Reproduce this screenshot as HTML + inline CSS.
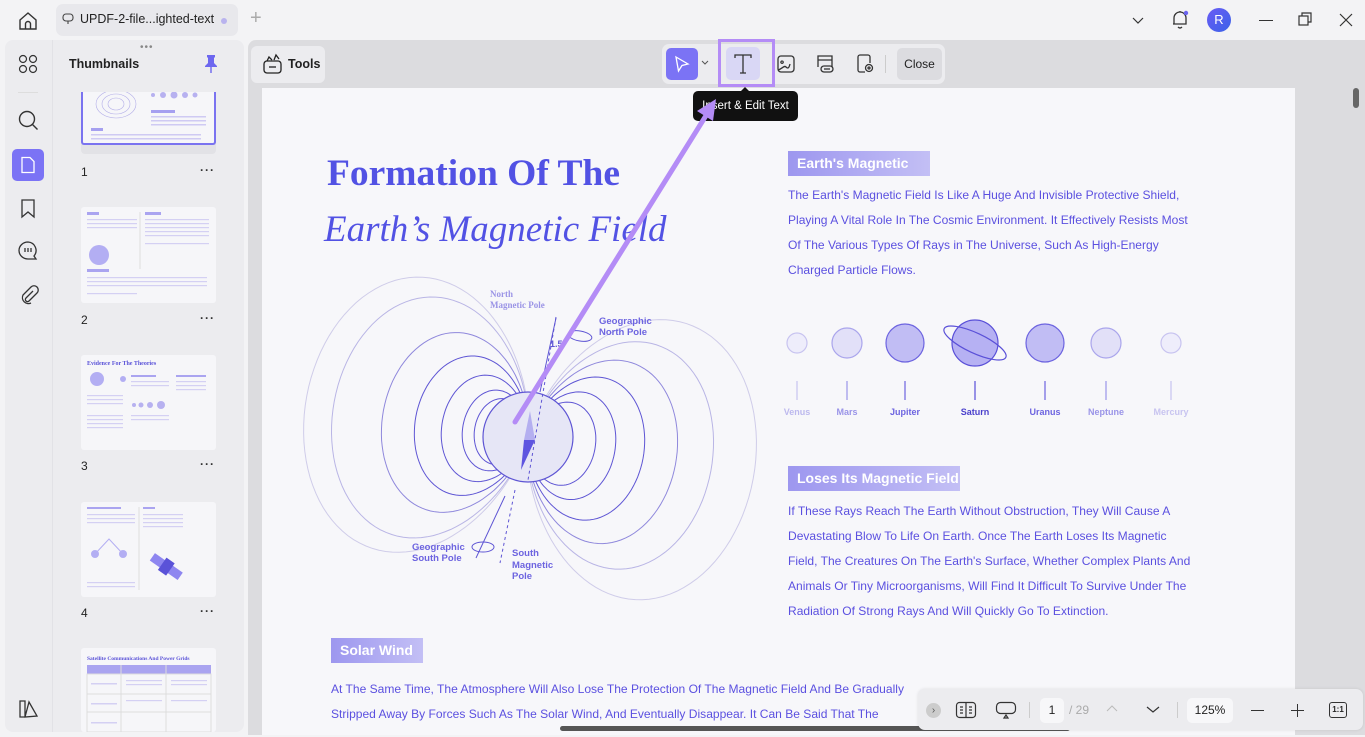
<!DOCTYPE html>
<html><head><meta charset="utf-8">
<style>
*{margin:0;padding:0;box-sizing:border-box}
body{width:1365px;height:735px;overflow:hidden;background:#f3f3f5;font-family:"Liberation Sans",sans-serif;position:relative}
.abs{position:absolute}
.txt{color:#5b50e0;font-size:12.05px;line-height:25px;white-space:nowrap}
.chip{position:absolute;height:25px;background:linear-gradient(90deg,#9d97ef,#c3bff5);color:#fff;font-weight:bold;font-size:14px;line-height:25px;padding-left:9px;white-space:nowrap}
.thumb{position:absolute;left:81px;width:135px;background:#f6f6f9;border-radius:3px}
.num{position:absolute;left:81px;font-size:12px;color:#222}
.dots{position:absolute;left:200px;font-size:12px;color:#333;letter-spacing:1px;font-weight:bold}
</style></head><body>
<!-- top bar -->
<svg class="abs" style="left:17px;top:10px" width="22" height="22" viewBox="0 0 22 22" fill="none" stroke="#333" stroke-width="1.4"><path d="M3 10 L11 3 L19 10 V19 H3 Z"/><path d="M8.5 19 V14 a2.5 2.5 0 0 1 5 0 V19"/></svg>
<div class="abs" style="left:56px;top:4px;width:182px;height:32px;background:#e8e8ec;border-radius:7px"></div>
<svg class="abs" style="left:62px;top:13px" width="12" height="12" viewBox="0 0 12 12" fill="none" stroke="#444" stroke-width="1.1"><rect x="1" y="1" width="10" height="7" rx="3"/><path d="M6 8v3"/></svg>
<div class="abs" style="left:80px;top:12px;font-size:12.5px;color:#222">UPDF-2-file...ighted-text</div>
<div class="abs" style="left:221px;top:18px;width:6px;height:6px;border-radius:50%;background:#b9b3ee"></div>
<div class="abs" style="left:250px;top:7px;font-size:20px;color:#aaa;font-weight:300">+</div>
<svg class="abs" style="left:1130px;top:13px" width="16" height="14" viewBox="0 0 16 14" fill="none" stroke="#333" stroke-width="1.2"><path d="M3 5l5 5 5-5"/></svg>
<svg class="abs" style="left:1170px;top:8px" width="20" height="24" viewBox="0 0 20 24" fill="none" stroke="#333" stroke-width="1.3"><path d="M4 16 V10 a6 6 0 0 1 12 0 V16 H3 M10 3v1 M8 19 q2 2 4 0"/><circle cx="16" cy="5" r="2.2" fill="#6b64f0" stroke="none"/></svg>
<div class="abs" style="left:1207px;top:8px;width:24px;height:24px;border-radius:50%;background:linear-gradient(135deg,#6a5cf5,#3a62e8);color:#fff;font-size:13px;text-align:center;line-height:24px">R</div>
<div class="abs" style="left:1259px;top:20px;width:14px;height:1.3px;background:#333"></div>
<svg class="abs" style="left:1298px;top:12px" width="15" height="15" viewBox="0 0 15 15" fill="none" stroke="#333" stroke-width="1.2"><rect x="1" y="4" width="9" height="9"/><path d="M4 4V1h9v9h-3"/></svg>
<svg class="abs" style="left:1339px;top:13px" width="14" height="14" viewBox="0 0 14 14" stroke="#333" stroke-width="1.2"><path d="M1 1l12 12M13 1L1 13"/></svg>

<!-- left sidebar -->
<div class="abs" style="left:5px;top:40px;width:239px;height:692px;background:#ececef;border-radius:8px"></div>
<div class="abs" style="left:52px;top:40px;width:1px;height:692px;background:#e2e2e6"></div>
<div class="abs" style="left:140px;top:42px;font-size:10px;color:#888;letter-spacing:1px">•••</div>
<svg class="abs" style="left:18px;top:54px" width="20" height="20" viewBox="0 0 20 20" fill="none" stroke="#333" stroke-width="1.2"><circle cx="5" cy="5" r="3.5"/><circle cx="15" cy="5" r="3.5"/><circle cx="5" cy="15" r="3.5"/><circle cx="15" cy="15" r="3.5"/></svg>
<div class="abs" style="left:18px;top:92px;width:20px;height:1px;background:#ddd"></div>
<svg class="abs" style="left:17px;top:109px" width="24" height="24" viewBox="0 0 24 24" fill="none" stroke="#333" stroke-width="1.4"><circle cx="10" cy="10" r="7.5"/><path d="M15.5 15.5l5 5"/></svg>
<div class="abs" style="left:12px;top:149px;width:32px;height:32px;background:#7b73f5;border-radius:5px"></div>
<svg class="abs" style="left:19px;top:156px" width="18" height="18" viewBox="0 0 18 18" fill="none" stroke="#fff" stroke-width="1.3"><path d="M3 1.5h8l4 4v11H3z"/></svg>
<svg class="abs" style="left:19px;top:199px" width="18" height="20" viewBox="0 0 18 20" fill="none" stroke="#333" stroke-width="1.3"><path d="M3 1h12v17l-6-5-6 5z"/></svg>
<svg class="abs" style="left:17px;top:240px" width="22" height="22" viewBox="0 0 22 22" fill="none" stroke="#333" stroke-width="1.3"><path d="M11 2a9 8.5 0 1 0 0 17h8l-2-3a8.5 8.5 0 0 0-6-14z"/><path d="M8 8v4M11 8v4M14 8v4"/></svg>
<svg class="abs" style="left:19px;top:285px" width="20" height="20" viewBox="0 0 20 20" fill="none" stroke="#333" stroke-width="1.3"><path d="M14 6l-7 7a2 2 0 0 0 3 3l8-8a4 4 0 0 0-6-6l-8 8a6 6 0 0 0 8 8"/></svg>
<svg class="abs" style="left:18px;top:699px" width="22" height="20" viewBox="0 0 22 20" fill="none" stroke="#333" stroke-width="1.3"><path d="M2 2h5v16H2zM7 18l4-15 8 14z"/></svg>
<div class="abs" style="left:69px;top:57px;font-size:12.5px;font-weight:bold;color:#222">Thumbnails</div>
<svg class="abs" style="left:203px;top:54px" width="16" height="20" viewBox="0 0 16 20" fill="#6d67ef"><path d="M4 1h8v2l-1 1v5l3 3v1H2v-1l3-3V4L4 3z"/><rect x="7.3" y="13" width="1.4" height="6"/></svg>
<!-- thumbs -->
<div class="abs" style="left:81px;top:92px;width:135px;height:62px;background:#e2e2e6;border-radius:4px"></div>
<div class="thumb" style="top:92px;height:53px;border:2px solid #7a73f0;border-top:none;border-radius:0 0 3px 3px">
<svg width="131" height="51"><g fill="none" stroke="#b3aee8" stroke-width=".6"><ellipse cx="33" cy="12" rx="20" ry="14"/><ellipse cx="33" cy="12" rx="14" ry="10"/><ellipse cx="33" cy="12" rx="8" ry="6"/></g><g fill="#b7b1f0"><circle cx="70" cy="3" r="2"/><circle cx="80" cy="3" r="3"/><circle cx="91" cy="3" r="3.5"/><circle cx="102" cy="3" r="3"/><circle cx="112" cy="3" r="2.5"/></g><rect x="68" y="18" width="24" height="3" fill="#a6a0f0"/><g fill="#cfcaf3"><rect x="68" y="24" width="55" height="1.5"/><rect x="68" y="28" width="55" height="1.5"/><rect x="68" y="32" width="55" height="1.5"/></g><rect x="8" y="36" width="12" height="3" fill="#a6a0f0"/><rect x="8" y="42" width="110" height="1.5" fill="#cfcaf3"/><rect x="8" y="46" width="110" height="1.5" fill="#cfcaf3"/></svg></div>
<div class="num" style="top:165px">1</div><div class="dots" style="top:163px">···</div>
<div class="thumb" style="top:207px;height:96px"><svg width="135" height="96"><rect x="6" y="5" width="12" height="3" fill="#aaa4f0"/><rect x="64" y="5" width="16" height="3" fill="#aaa4f0"/><g fill="#d4d0f3"><rect x="6" y="12" width="50" height="1.2"/><rect x="6" y="16" width="50" height="1.2"/><rect x="6" y="20" width="50" height="1.2"/><rect x="64" y="12" width="64" height="1.2"/><rect x="64" y="16" width="64" height="1.2"/><rect x="64" y="20" width="64" height="1.2"/><rect x="64" y="24" width="64" height="1.2"/><rect x="64" y="28" width="64" height="1.2"/><rect x="64" y="36" width="64" height="1.2"/><rect x="6" y="70" width="120" height="1.2"/><rect x="6" y="74" width="120" height="1.2"/><rect x="6" y="78" width="120" height="1.2"/><rect x="6" y="86" width="50" height="1.2"/></g><circle cx="18" cy="48" r="10" fill="#b3aef3"/><rect x="6" y="62" width="22" height="3" fill="#aaa4f0"/><line x1="59" y1="5" x2="59" y2="62" stroke="#ddd"/></svg></div>
<div class="num" style="top:313px">2</div><div class="dots" style="top:311px">···</div>
<div class="thumb" style="top:355px;height:95px"><svg width="135" height="95"><text x="6" y="10" font-size="6" font-weight="bold" fill="#5a52d8" font-family="Liberation Serif">Evidence For The Theories</text><circle cx="16" cy="24" r="7" fill="#b3aef3"/><circle cx="42" cy="24" r="3" fill="#b3aef3"/><rect x="50" y="20" width="25" height="2" fill="#aaa4f0"/><rect x="95" y="20" width="30" height="2" fill="#aaa4f0"/><g fill="#d4d0f3"><rect x="6" y="40" width="36" height="1.2"/><rect x="6" y="44" width="36" height="1.2"/><rect x="6" y="48" width="36" height="1.2"/><rect x="6" y="60" width="36" height="1.2"/><rect x="6" y="64" width="36" height="1.2"/><rect x="6" y="68" width="36" height="1.2"/><rect x="6" y="72" width="36" height="1.2"/><rect x="50" y="26" width="38" height="1.2"/><rect x="50" y="30" width="38" height="1.2"/><rect x="95" y="26" width="30" height="1.2"/><rect x="95" y="30" width="30" height="1.2"/><rect x="95" y="34" width="30" height="1.2"/><rect x="50" y="60" width="38" height="1.2"/><rect x="50" y="64" width="38" height="1.2"/></g><g fill="#b7b1f0"><circle cx="53" cy="50" r="2"/><circle cx="60" cy="50" r="2.5"/><circle cx="69" cy="50" r="3"/><circle cx="80" cy="50" r="4"/></g></svg></div>
<div class="num" style="top:459px">3</div><div class="dots" style="top:457px">···</div>
<div class="thumb" style="top:502px;height:95px"><svg width="135" height="95"><rect x="6" y="5" width="34" height="2" fill="#aaa4f0"/><rect x="62" y="5" width="12" height="2" fill="#aaa4f0"/><g fill="#d4d0f3"><rect x="6" y="12" width="48" height="1.2"/><rect x="6" y="16" width="48" height="1.2"/><rect x="6" y="20" width="48" height="1.2"/><rect x="62" y="12" width="40" height="1.2"/><rect x="62" y="16" width="40" height="1.2"/><rect x="62" y="20" width="40" height="1.2"/><rect x="62" y="24" width="40" height="1.2"/><rect x="6" y="80" width="48" height="1.2"/><rect x="6" y="84" width="48" height="1.2"/></g><path d="M14 52 L28 37 L42 52" fill="none" stroke="#b3aef3"/><circle cx="14" cy="52" r="4" fill="#b3aef3"/><circle cx="42" cy="52" r="4" fill="#b3aef3"/><g transform="rotate(35 85 65)"><rect x="68" y="60" width="34" height="9" fill="#8e86f0"/><rect x="80" y="57" width="10" height="15" fill="#5a52d8"/></g><line x1="58" y1="5" x2="58" y2="88" stroke="#ddd"/></svg></div>
<div class="num" style="top:606px">4</div><div class="dots" style="top:604px">···</div>
<div class="thumb" style="top:648px;height:84px"><svg width="135" height="84"><text x="6" y="12" font-size="5.5" font-weight="bold" fill="#5a52d8" font-family="Liberation Serif">Satellite Communications And Power Grids</text><rect x="6" y="17" width="124" height="9" fill="#aaa4f0"/><g stroke="#ddd" fill="none"><rect x="6" y="26" width="124" height="58"/><line x1="40" y1="17" x2="40" y2="84"/><line x1="85" y1="17" x2="85" y2="84"/><line x1="6" y1="46" x2="130" y2="46"/><line x1="6" y1="64" x2="130" y2="64"/></g><g fill="#d4d0f3"><rect x="10" y="35" width="26" height="1.5"/><rect x="45" y="32" width="36" height="1.2"/><rect x="45" y="36" width="36" height="1.2"/><rect x="90" y="32" width="36" height="1.2"/><rect x="90" y="36" width="36" height="1.2"/><rect x="10" y="55" width="26" height="1.5"/><rect x="45" y="52" width="36" height="1.2"/><rect x="90" y="52" width="36" height="1.2"/><rect x="10" y="74" width="26" height="1.5"/></g></svg></div>

<!-- main area -->
<div class="abs" style="left:248px;top:40px;width:1117px;height:695px;background:#dcdcdf;border-radius:8px 0 0 0"></div>
<div class="abs" style="left:262px;top:88px;width:1033px;height:647px;background:#f7f7fa"></div>
<div class="abs" style="left:1353px;top:88px;width:6px;height:20px;background:#666;border-radius:3px"></div>
<!-- tools button -->
<div class="abs" style="left:251px;top:46px;width:74px;height:37px;background:#ececef;border-radius:6px"></div>
<svg class="abs" style="left:262px;top:53px" width="22" height="22" viewBox="0 0 22 22" fill="none" stroke="#222" stroke-width="1.3"><rect x="2" y="8" width="17" height="12" rx="3"/><path d="M7 14h7"/><path d="M5 8l2-4 3 3M12 7l2-5 3 4"/></svg>
<div class="abs" style="left:288px;top:57px;font-size:12.5px;font-weight:bold;color:#222">Tools</div>
<!-- center group -->
<div class="abs" style="left:662px;top:44px;width:283px;height:40px;background:#ececef;border-radius:7px"></div>
<div class="abs" style="left:666px;top:48px;width:32px;height:32px;background:#7b73f5;border-radius:5px"></div>
<svg class="abs" style="left:673px;top:55px" width="18" height="18" viewBox="0 0 18 18" fill="none" stroke="#fff" stroke-width="1.3"><path d="M3 2l12 7-6 1.5L5.5 16z"/></svg>
<svg class="abs" style="left:701px;top:60px" width="8" height="6" viewBox="0 0 8 6" fill="none" stroke="#555"><path d="M1 1l3 3 3-3"/></svg>
<div class="abs" style="left:718px;top:39px;width:57px;height:48px;border:3px solid #b48cf6"></div>
<div class="abs" style="left:726px;top:47px;width:34px;height:33px;background:#d9d7f5;border-radius:5px"></div>
<svg class="abs" style="left:733px;top:53px" width="20" height="22" viewBox="0 0 20 22" fill="none" stroke="#333" stroke-width="1.3"><path d="M2 5V2h16v3M10 2v18M7 20h6"/></svg>
<svg class="abs" style="left:776px;top:54px" width="20" height="20" viewBox="0 0 20 20" fill="none" stroke="#333" stroke-width="1.3"><rect x="2" y="2" width="16" height="16" rx="3"/><path d="M2 16c4-1 6-5 8-3s3 1 4-3M6 7a1.2 1.2 0 1 0 .1 0"/></svg>
<svg class="abs" style="left:815px;top:53px" width="20" height="22" viewBox="0 0 20 22" fill="none" stroke="#333" stroke-width="1.3"><path d="M3 14V3h14v11M3 7h14"/><rect x="6" y="13" width="12" height="6" rx="3"/><path d="M9 16h6"/></svg>
<svg class="abs" style="left:855px;top:53px" width="20" height="22" viewBox="0 0 20 22" fill="none" stroke="#333" stroke-width="1.3"><path d="M10 19H5a2 2 0 0 1-2-2V4a2 2 0 0 1 2-2h8a2 2 0 0 1 2 2v6"/><circle cx="14" cy="15" r="3.5"/><circle cx="14" cy="15" r="1"/></svg>
<div class="abs" style="left:885px;top:55px;width:1px;height:18px;background:#ccc"></div>
<div class="abs" style="left:897px;top:48px;width:45px;height:32px;background:#dcdce0;border-radius:5px;font-size:12px;color:#222;text-align:center;line-height:32px">Close</div>

<!-- page content -->
<div class="abs" style="left:327px;top:152px;font-family:'Liberation Serif',serif;font-weight:bold;font-size:37.5px;color:#5252e4;white-space:nowrap">Formation Of The</div>
<div class="abs" style="left:324px;top:208px;font-family:'Liberation Serif',serif;font-style:italic;font-size:37px;color:#5252e4;white-space:nowrap">Earth’s Magnetic Field</div>

<div class="chip" style="left:788px;top:151px;width:142px">Earth's Magnetic</div>
<div class="abs txt" style="left:788px;top:183px">The Earth's Magnetic Field Is Like A Huge And Invisible Protective Shield,<br>Playing A Vital Role In The Cosmic Environment. It Effectively Resists Most<br>Of The Various Types Of Rays in The Universe, Such As High-Energy<br>Charged Particle Flows.</div>

<svg class="abs" style="left:780px;top:310px" width="420" height="110">
<g stroke-width="1.2">
<circle cx="17" cy="33" r="10" fill="#eeedfb" stroke="#c8c4f0"/>
<circle cx="67" cy="33" r="15" fill="#e2e0f8" stroke="#aaa5ec"/>
<circle cx="125" cy="33" r="19" fill="#c1bdf4" stroke="#6d64e0"/>
<circle cx="195" cy="33" r="23" fill="#b6b1f3" stroke="#5a50d8"/>
<ellipse cx="195" cy="33" rx="34" ry="10" transform="rotate(25 195 33)" fill="none" stroke="#5a50d8"/>
<circle cx="265" cy="33" r="19" fill="#c1bdf4" stroke="#6d64e0"/>
<circle cx="326" cy="33" r="15" fill="#e2e0f8" stroke="#aaa5ec"/>
<circle cx="391" cy="33" r="10" fill="#eeedfb" stroke="#c8c4f0"/>
</g>
<g stroke-width="1.2"><line x1="17" y1="71" x2="17" y2="90" stroke="#c8c4f0"/><line x1="67" y1="71" x2="67" y2="90" stroke="#9a94e8"/><line x1="125" y1="71" x2="125" y2="90" stroke="#6d64e0"/><line x1="195" y1="71" x2="195" y2="90" stroke="#5a50d8"/><line x1="265" y1="71" x2="265" y2="90" stroke="#6d64e0"/><line x1="326" y1="71" x2="326" y2="90" stroke="#9a94e8"/><line x1="391" y1="71" x2="391" y2="90" stroke="#c8c4f0"/></g>
<g font-size="9" font-weight="bold" text-anchor="middle" font-family="Liberation Sans"><text x="17" y="105" fill="#bdb9ee">Venus</text><text x="67" y="105" fill="#9a94e8">Mars</text><text x="125" y="105" fill="#6d64e0">Jupiter</text><text x="195" y="105" fill="#4a40cc">Saturn</text><text x="265" y="105" fill="#6d64e0">Uranus</text><text x="326" y="105" fill="#9a94e8">Neptune</text><text x="391" y="105" fill="#c8c4f0">Mercury</text></g>
</svg>

<div class="chip" style="left:788px;top:466px;width:172px">Loses Its Magnetic Field</div>
<div class="abs txt" style="left:788px;top:499px">If These Rays Reach The Earth Without Obstruction, They Will Cause A<br>Devastating Blow To Life On Earth. Once The Earth Loses Its Magnetic<br>Field, The Creatures On The Earth's Surface, Whether Complex Plants And<br>Animals Or Tiny Microorganisms, Will Find It Difficult To Survive Under The<br>Radiation Of Strong Rays And Will Quickly Go To Extinction.</div>

<div class="chip" style="left:331px;top:638px;width:92px">Solar Wind</div>
<div class="abs txt" style="left:331px;top:677px">At The Same Time, The Atmosphere Will Also Lose The Protection Of The Magnetic Field And Be Gradually<br>Stripped Away By Forces Such As The Solar Wind, And Eventually Disappear. It Can Be Said That The</div>

<!-- tooltip -->
<div class="abs" style="left:740px;top:87px;width:0;height:0;border-left:5px solid transparent;border-right:5px solid transparent;border-bottom:5px solid #111"></div>
<div class="abs" style="left:693px;top:91px;width:105px;height:30px;background:#111;border-radius:5px;color:#fff;font-size:11.5px;text-align:center;line-height:30px">Insert &amp; Edit Text</div>

<!-- diagram -->
<svg class="abs" style="left:0;top:0" width="1365" height="735">
<g id="field" fill="none" stroke-width="1" transform="rotate(10.5 528 437)"></g>
<circle cx="528" cy="437" r="45" fill="#e6e6f6" stroke="#5e55d4" stroke-width="1.2"/>
<path d="M530,411 L535,440 L524,440 Z" fill="#b4aff0"/>
<path d="M524,440 L535,440 L521,470 Z" fill="#5e55e0"/>
<g stroke="#5e55d4" stroke-width="1" fill="none"><path d="M556,318 L540,392"/><path d="M505,496 L476,558"/><path stroke-dasharray="3,3" d="M556,317 L528,480"/><path stroke-dasharray="3,3" d="M515,490 L500,563"/><ellipse cx="580" cy="336" rx="12" ry="5" transform="rotate(10 580 336)"/><ellipse cx="483" cy="547" rx="11" ry="5"/></g>
<text x="550" y="347" font-size="9" font-weight="bold" fill="#5e55d4" font-family="Liberation Sans">1.5</text>
<g font-size="9.5" font-weight="bold" fill="#6d64e0" font-family="Liberation Sans"><text x="599" y="324">Geographic</text><text x="599" y="335">North Pole</text><text x="412" y="550">Geographic</text><text x="412" y="561">South Pole</text><text x="512" y="556">South</text><text x="512" y="568">Magnetic</text><text x="512" y="579">Pole</text></g>
<g font-size="9" font-weight="bold" fill="#9b94e6" font-family="Liberation Serif"><text x="490" y="297">North</text><text x="490" y="308">Magnetic Pole</text></g>
<path d="M515,422 L707,114" stroke="#b48cf6" stroke-width="5" stroke-linecap="round"/>
<path d="M716,99 L697,111 L713,121 Z" fill="#b48cf6"/>
</svg>
<script>
(function(){
var g=document.getElementById('field');
var cx=528,cy=437,S=1.6;
var loops=[[-225,'#cfcce9'],[-197,'#b9b5e5'],[-147,'#8f88dc'],[-114,'#5e55d4'],[-87,'#5e55d4'],[-66,'#5e55d4'],[-54,'#5e55d4'],[229,'#cfcce9'],[186,'#b9b5e5'],[150,'#8f88dc'],[117,'#5e55d4'],[88,'#5e55d4'],[68,'#5e55d4']];
loops.forEach(function(l){
 var L=Math.abs(l[0]),s=l[0]<0?-1:1,d='';
 for(var i=0;i<=120;i++){var t=Math.PI*i/120,r=L*Math.sin(t)*Math.sin(t);
  var x=cx+s*r*Math.sin(t),y=cy-r*Math.cos(t)*S;d+=(i?'L':'M')+x.toFixed(1)+','+y.toFixed(1);}
 var p=document.createElementNS('http://www.w3.org/2000/svg','path');
 p.setAttribute('d',d);p.setAttribute('stroke',l[1]);g.appendChild(p);
});
})();
</script>

<!-- bottom bar -->
<div class="abs" style="left:560px;top:726px;width:510px;height:5px;background:#555;border-radius:3px"></div>
<div class="abs" style="left:918px;top:689px;width:445px;height:41px;background:#ececef;border-radius:7px;box-shadow:0 0 3px rgba(0,0,0,.1)"></div>
<div class="abs" style="left:926px;top:703px;width:15px;height:15px;border-radius:50%;background:#ccc;color:#555;font-size:10px;text-align:center;line-height:15px">›</div>
<svg class="abs" style="left:955px;top:701px" width="22" height="18" viewBox="0 0 22 18" fill="none" stroke="#333" stroke-width="1.2"><rect x="1.5" y="1.5" width="19" height="15" rx="3"/><path d="M11 1.5v15M5 6h3M5 9h3M5 12h3M14 6h3M14 9h3M14 12h3"/></svg>
<svg class="abs" style="left:995px;top:701px" width="22" height="18" viewBox="0 0 22 18" fill="none" stroke="#333" stroke-width="1.2"><rect x="1.5" y="1.5" width="19" height="11" rx="4"/><path d="M9 17l2-3 2 3z"/></svg>
<div class="abs" style="left:1029px;top:702px;width:1px;height:16px;background:#ccc"></div>
<div class="abs" style="left:1040px;top:698px;width:24px;height:25px;background:#f7f7f9;border-radius:5px;font-size:12px;text-align:center;line-height:25px;color:#222">1</div>
<div class="abs" style="left:1069px;top:703px;font-size:12px;color:#aaa">/ 29</div>
<svg class="abs" style="left:1106px;top:705px" width="12" height="8" viewBox="0 0 12 8" fill="none" stroke="#bbb"><path d="M1 6l5-5 5 5"/></svg>
<svg class="abs" style="left:1146px;top:706px" width="14" height="8" viewBox="0 0 14 8" fill="none" stroke="#333" stroke-width="1.2"><path d="M1 1l6 5 6-5"/></svg>
<div class="abs" style="left:1177px;top:702px;width:1px;height:16px;background:#ccc"></div>
<div class="abs" style="left:1187px;top:698px;width:46px;height:25px;background:#f7f7f9;border-radius:5px;font-size:12px;text-align:center;line-height:25px;color:#222">125%</div>
<div class="abs" style="left:1251px;top:710px;width:13px;height:1.3px;background:#333"></div>
<div class="abs" style="left:1291px;top:710px;width:13px;height:1.3px;background:#333"></div>
<div class="abs" style="left:1297px;top:704px;width:1.3px;height:13px;background:#333"></div>
<div class="abs" style="left:1329px;top:702px;width:18px;height:16px;border:1.2px solid #333;border-radius:3px;font-size:8px;text-align:center;line-height:14px;color:#222;font-weight:bold">1:1</div>
</body></html>
